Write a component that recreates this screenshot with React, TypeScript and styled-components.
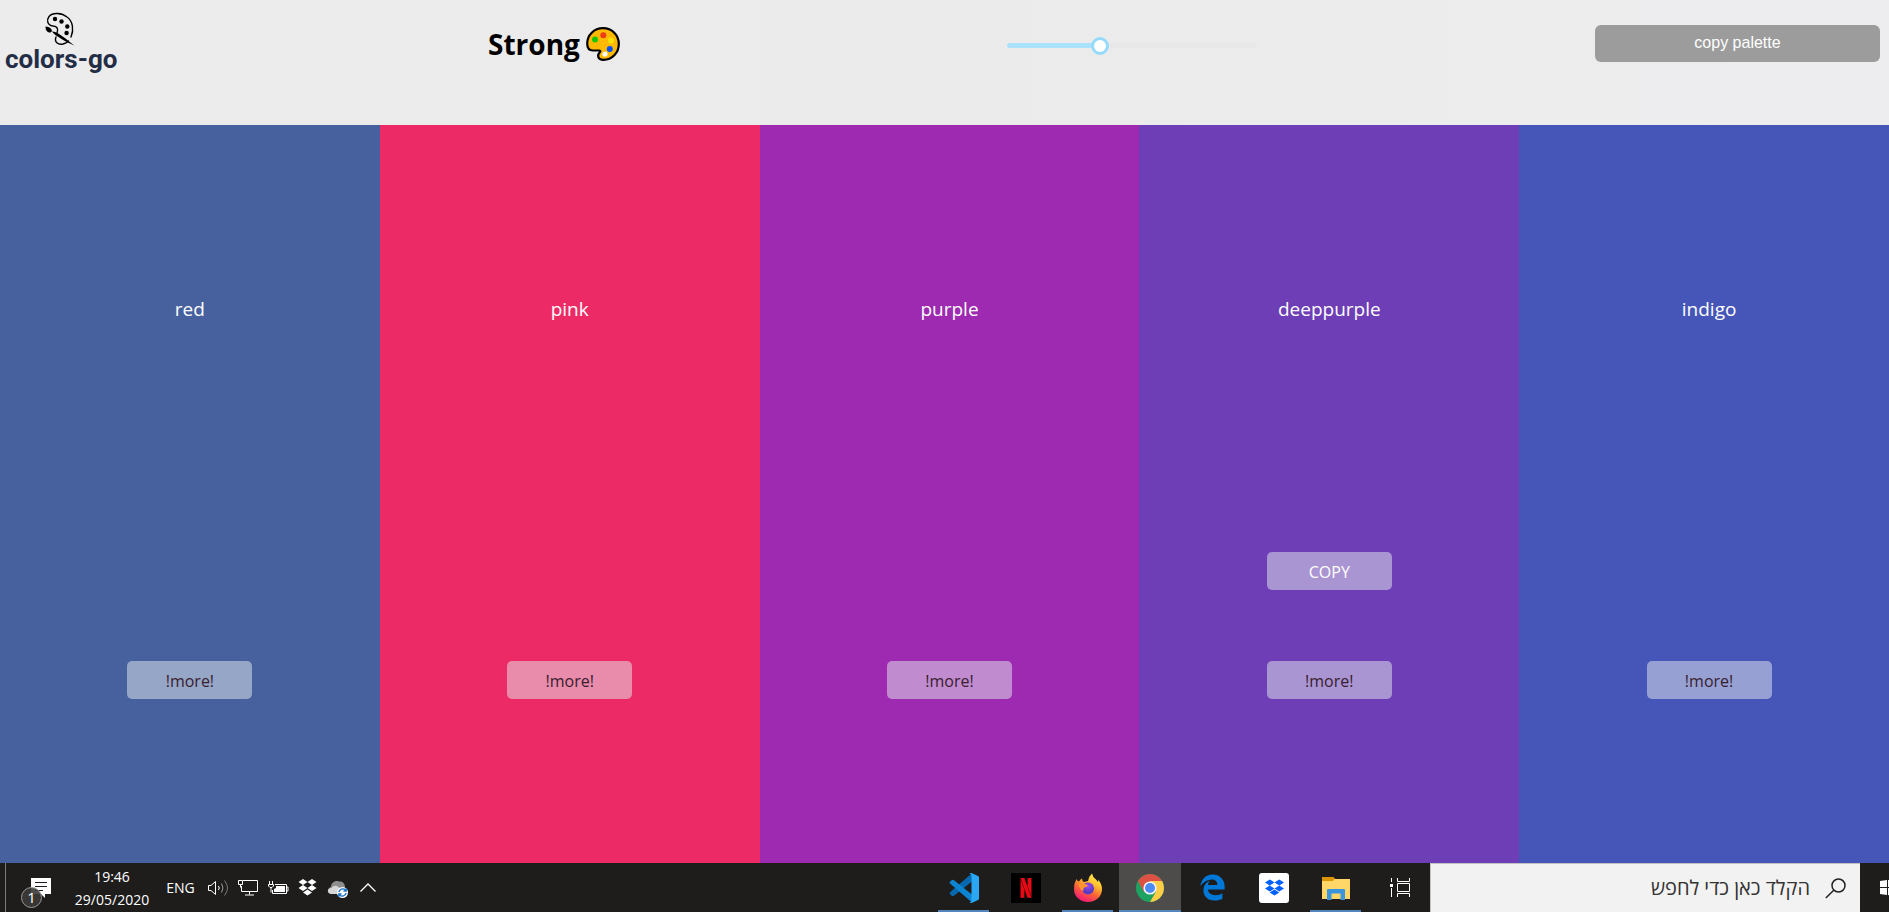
import React, { useState } from "react";
import styled, { createGlobalStyle } from "styled-components";
import { FaDropbox, FaEdgeLegacy } from "react-icons/fa";
import { SiNetflix } from "react-icons/si";

const GlobalStyle = createGlobalStyle`
  *, *::before, *::after { box-sizing: border-box; }
  body { margin: 0; overflow: hidden; font-family: "Open Sans", "Noto Sans", sans-serif; }
  button, input { font-family: inherit; margin: 0; }
  button { border: 0; padding: 0; background: none; cursor: pointer; }
  svg { display: block; }
`;

const Page = styled.div`
  display: flex;
  flex-direction: column;
  min-height: 100vh;
  overflow: hidden;
  background: #ececec;
`;

const Header = styled.header`
  display: grid;
  grid-template-columns: 483fr 519fr 588fr 285fr;
  align-items: start;
  height: 125px;
  padding: 0 9px 0 5px;
  background: linear-gradient(90deg, #ececed, #ebebeb 50%, #ededef);
`;

const Logo = styled.a`
  display: flex;
  flex-direction: column;
  width: 116px;
  padding-top: 12px;
  color: #232d45;
  text-decoration: none;
  white-space: nowrap;
  font: bold 26px/32px Roboto, "Liberation Sans", sans-serif;
`;

const LogoArt = styled.svg`
  width: 32px;
  height: 34px;
  margin: 0 0 -3px 40px;
`;

const Title = styled.h1`
  display: flex;
  align-items: center;
  gap: 6px;
  margin: 0;
  padding-top: 26px;
  color: #000;
  font-size: 28px;
  line-height: 36px;
  font-weight: 700;
`;

const Slider = styled.input`
  appearance: none;
  width: 250px;
  height: 18px;
  margin-top: 36px;
  background: transparent;

  &::-webkit-slider-runnable-track {
    height: 5px;
    border-radius: 3px;
    background: linear-gradient(90deg, #abe2fb 37%, #e8e8e8 37%);
  }
  &::-webkit-slider-thumb {
    appearance: none;
    width: 18px;
    height: 18px;
    margin-top: -6px;
    border: 3px solid #96dbfa;
    border-radius: 50%;
    background: #fff;
  }
`;

const CopyPalette = styled.button`
  height: 37px;
  margin-top: 25px;
  padding-bottom: 2px;
  border-radius: 6px;
  background: #9c9c9c;
  color: #fff;
  font: 16px/20px "Liberation Sans", sans-serif;
`;

const Palette = styled.main`
  display: grid;
  flex: 1;
  grid-template-columns: repeat(5, 1fr);
  width: calc(100% + 10px);
`;

const Swatch = styled.section<{ $color: string }>`
  display: flex;
  flex-direction: column;
  align-items: center;
  justify-content: space-between;
  padding: 169px 0 164px;
  background: ${(p) => p.$color};
`;

const SwatchName = styled.h2`
  margin: 0;
  color: #fff;
  font-size: 19px;
  line-height: 30px;
  font-weight: 400;
`;

const Actions = styled.div`
  display: flex;
  flex-direction: column;
  gap: 71px;
`;

const SwatchButton = styled.button<{ $strong?: boolean }>`
  width: 125px;
  height: 38px;
  padding-top: 2px;
  border-radius: 5px;
  background: rgba(230, 236, 238, 0.5);
  color: ${(p) => (p.$strong ? "#fff" : "#38202f")};
  font-size: 16px;
  line-height: 24px;
`;

const Taskbar = styled.footer`
  display: flex;
  height: 49px;
  background: #1e1d1c;
  color: #fff;
`;

const DesktopEdge = styled.button`
  width: 6px;
  border-right: 1px solid #7c7c7b;
`;

const TrayButton = styled.button<{ $width: number }>`
  width: ${(p) => p.$width}px;
  color: #fff;
  font-size: 14px;
  line-height: 23px;
`;

const Apps = styled.nav`
  display: flex;
  margin: 0 1px 0 auto;
`;

const AppButton = styled.button<{ $running?: boolean; $active?: boolean }>`
  display: flex;
  flex-direction: column;
  align-items: center;
  justify-content: center;
  position: relative;
  width: 62px;
  background: ${(p) => (p.$active ? "#4d4c4b" : "transparent")};

  &::after {
    content: "";
    position: absolute;
    bottom: 0;
    left: ${(p) => (p.$active ? 0 : 5)}px;
    right: ${(p) => (p.$active ? 0 : 6)}px;
    height: 2px;
    background: ${(p) => (p.$running || p.$active ? "#5585bd" : "transparent")};
  }
`;

const Tile = styled.span<{ $bg: string; $fg: string }>`
  display: grid;
  place-items: center;
  width: 30px;
  height: 30px;
  border-radius: ${(p) => (p.$bg === "#fff" ? 3 : 0)}px;
  background: ${(p) => p.$bg};
  color: ${(p) => p.$fg};
`;

const Search = styled.label`
  display: flex;
  align-items: center;
  gap: 15px;
  width: 430px;
  padding: 0 14px;
  border-top: 1px solid #c2c2c2;
  border-left: 1px solid #c2c2c2;
  background: #f2f2f2;
  direction: rtl;
`;

const SearchInput = styled.input`
  flex: 1;
  min-width: 0;
  padding: 0;
  border: 0;
  outline: 0;
  background: transparent;
  font-size: 20px;
  line-height: 28px;
  &::placeholder { color: #333; opacity: 1; }
`;

const StartButton = styled.button`
  width: 29px;
  overflow: hidden;
`;

const swatches = [
  { name: "red", color: "#47619f" },
  { name: "pink", color: "#ec2b66" },
  { name: "purple", color: "#9d2ab1" },
  { name: "deeppurple", color: "#6d3eb6", hovered: true },
  { name: "indigo", color: "#4655b8" },
];

const PaletteSketch = () => (
  <LogoArt viewBox="0 0 32 34" aria-hidden="true">
    <path
      d="M12 21C13.500 17 12.500 14.500 8 14C2 13 1.500 8 4 4.500C8 0 17 1 22 5C28 9 29 18 26 25M11 25C9 30 13 33 18 32C20 31.500 22 30.500 23.500 29"
      fill="none" stroke="#000" strokeWidth="1.400" strokeLinecap="round"
    />
    <circle cx="10" cy="7" r="2.200" />
    <circle cx="16.500" cy="9.500" r="2.200" />
    <circle cx="22.300" cy="14.500" r="2.200" />
    <circle cx="21.600" cy="21" r="2.200" />
    <path d="M.5 14.500C3 15 5 15 6.500 17.500C7.500 19 6.500 20.500 5 20.500C2 20.500.5 18 .5 14.500zM7 19.500C10 19 14 21.500 17 24C22 27.500 26 31 29.500 33.500C24 31.500 19 28.500 15 26C12 24 9 22.500 7 19.500z" />
  </LogoArt>
);

const PaletteEmoji = () => (
  <svg width="34" height="34" viewBox="0 0 34 34" aria-hidden="true">
    <path
      d="M17 1.200C8 1.200 1.200 8 1.200 16.500C1.200 21 3.500 23.500 7 23.500H13.500C14.500 23.500 14.500 24.500 13.800 25.300C11 28 11.500 32.800 17.500 32.800C26 32.800 32.800 26 32.800 17C32.800 8 26 1.200 17 1.200z"
      fill="#ffb900" stroke="#000" strokeWidth="2.200"
    />
    <circle cx="9" cy="12.500" r="3" fill="#16c60c" />
    <circle cx="17.300" cy="8.200" r="3" fill="#f03a17" />
    <circle cx="25" cy="13.500" r="3" fill="#fce100" />
    <circle cx="23.800" cy="22" r="3" fill="#0050ff" />
    <circle cx="19" cy="27" r="2.600" fill="#fff" />
  </svg>
);

const NotificationIcon = () => (
  <svg width="60" height="49" viewBox="0 0 60 49">
    <path d="M25 15H45V31H39V35L35 31H25z" fill="#fff" />
    <path d="M29 19.500H41M29 23.500H41M29 27.500H37" stroke="#1e1d1c" />
    <circle cx="25.500" cy="34.500" r="10" fill="#3c3b3a" fillOpacity=".9" stroke="#9a9a99" />
    <text x="25.500" y="40" textAnchor="middle" fill="#fff" fontSize="15">1</text>
  </svg>
);

const VolumeIcon = () => (
  <svg width="30" height="49" viewBox="0 0 30 49" fill="none">
    <path d="M5.500 22.500H8L12.500 18.500V31.500L8 27.500H5.500z" stroke="#fff" />
    <path d="M15.500 23Q17 25 15.500 27" stroke="#fff" />
    <path d="M18.500 20.500Q21.500 25 18.500 29.500" stroke="#999" />
    <path d="M21.500 17.500Q27.500 25 21.500 32.500" stroke="#777" />
  </svg>
);

const NetworkIcon = () => (
  <svg width="30" height="49" viewBox="0 0 30 49" fill="none" stroke="#fff">
    <path d="M10 17.500H24.500V28.500H8.500V23M16.500 29V31.500M12 32H21" />
    <path d="M5.500 17.500H9.500V21.500H5.500zM7.500 21.500V24.500" />
  </svg>
);

const BatteryIcon = () => (
  <svg width="30" height="49" viewBox="0 0 30 49">
    <path d="M12 21.500H23.500V30.500H9.500V27M24 24H25V28H24" fill="none" stroke="#fff" />
    <path d="M13 23H22V29H11V26L13 25z" fill="#fff" />
    <path d="M6.500 18V21M9.500 18V21M5.500 21.500H10.500V23L9 24.500H7L5.500 23zM8 24.500V29.500" fill="none" stroke="#fff" />
  </svg>
);

const TrayDropbox = () => (
  <svg width="30" height="49" viewBox="0 0 30 49" fill="#fff">
    <path d="M10 16L14.500 19L10 22L5.500 19zM19 16L23.500 19L19 22L14.500 19zM10 22L14.500 25L10 28L5.500 25zM19 22L23.500 25L19 28L14.500 25zM14.500 26.500L19 29.500L14.500 32.500L10 29.500z" />
  </svg>
);

const CloudIcon = () => (
  <svg width="30" height="49" viewBox="0 0 30 49">
    <path d="M9 31C4 31 4 25 8 24C8 20 12 17 16 18.500C19 18 22 20 22 24V31z" fill="#8d8d8d" />
    <path d="M8 31C3.500 30 4 25 8.500 25C11 21 16 23 17 26V31z" fill="#d5d5d5" />
    <circle cx="19.500" cy="29.500" r="5.500" fill="#fff" />
    <path d="M15.800 29A4 4 0 0 1 22.500 27M23.200 25V28H20.500M23.200 30A4 4 0 0 1 16.500 32M15.800 34V31H18.500" fill="none" stroke="#1670c4" strokeWidth="1.300" />
  </svg>
);

const ChevronIcon = () => (
  <svg width="30" height="49" viewBox="0 0 30 49">
    <path d="M7.500 28.500L15 21L22.500 28.500" fill="none" stroke="#fff" strokeWidth="1.300" />
  </svg>
);

const CodeIcon = () => (
  <svg width="30" height="30" viewBox="0 0 30 30">
    <path d="M1 21.300L3 23Q4 23.500 5 22.700L23 8.500V.3L1 19.300Q.2 20.300 1 21.300z" fill="#0669b0" />
    <path d="M1 8.500L3 7Q4 6.500 5 7.300L23 21.500V29.500L1 10.500Q.2 9.500 1 8.500z" fill="#0c84d0" />
    <path d="M22.500 0L29 3Q30 3.500 30 4.500V25.500Q30 26.500 29 27L22.500 30Q21 30 20.500 29Q22.500 29.500 22.500 27.500V2.500Q22.500.5 20.500 1Q21 0 22.500 0z" fill="#2aa7f5" />
  </svg>
);

const FirefoxIcon = () => (
  <svg width="30" height="30" viewBox="0 0 30 30">
    <defs>
      <linearGradient id="flame" x1=".8" y1="0" x2=".3" y2="1">
        <stop offset="0" stopColor="#fff44f" />
        <stop offset=".35" stopColor="#ffbd2e" />
        <stop offset=".6" stopColor="#ff6a33" />
        <stop offset="1" stopColor="#f5147a" />
      </linearGradient>
      <radialGradient id="globe" cx=".5" cy=".3">
        <stop offset="0" stopColor="#a34cf0" />
        <stop offset="1" stopColor="#5a3bc4" />
      </radialGradient>
    </defs>
    <path d="M3.500 6Q4 8 6 8.500Q7 6.500 9 5.500Q9 8 11 9L15 8Q16 3 19 .5Q19.500 4 23 6.500L25 9Q25.500 8 25 6.500Q29 11 29 16C29 23.500 23 29 15 29S1 23.500 1 16Q1 10 3.500 6z" fill="url(#flame)" />
    <circle cx="15" cy="15.500" r="6" fill="url(#globe)" />
    <path d="M5 11Q9 8.500 15 12.500Q14 14.500 11 14.500Q10 16 10.500 18Q7 17 6 13z" fill="#ff9430" />
  </svg>
);

const ChromeIcon = () => (
  <svg width="28" height="28" viewBox="0 0 28 28">
    <circle cx="14" cy="14" r="14" fill="#1da261" />
    <path d="M14 14L8 18L1.900 7A14 14 0 0 1 26.100 7z" fill="#dd5144" />
    <path d="M14 7H26.100A14 14 0 0 1 14 28L20 17.500z" fill="#ffcd46" />
    <circle cx="14" cy="14" r="6.600" fill="#f4f4f4" />
    <circle cx="14" cy="14" r="5" fill="#4c8bf5" />
  </svg>
);

const FolderIcon = () => (
  <svg width="28" height="24" viewBox="0 0 28 24">
    <path d="M0 2Q0 1 1 1H11L13 3H27V22H0z" fill="#fbc94e" />
    <path d="M0 2Q0 1 1 1H11Q12 1 12.500 3L11 5H0z" fill="#dd9400" />
    <path d="M0 5H11L13 3H28V23H0z" fill="#ffd667" />
    <path d="M5 24V14Q5 13 6 13H22Q23 13 23 14V24H18.500V17.500H9.500V24z" fill="#3a95dc" />
  </svg>
);

const TaskViewIcon = () => (
  <svg width="62" height="49" viewBox="0 0 62 49" fill="none" stroke="#fff">
    <path d="M24.500 15V19M24.500 25V34M30.500 15V18.500H42.500V15M30.500 34V30.500H42.500V34M30.500 20.500H42.500V28.500H30.500z" />
    <path d="M23 21H26V24H23z" fill="#fff" stroke="none" />
  </svg>
);

const SearchIcon = () => (
  <svg width="21" height="21" viewBox="0 0 21 21" fill="none" stroke="#222" strokeWidth="1.500">
    <circle cx="13.500" cy="7.500" r="6.500" />
    <path d="M9 12L.8 20" />
  </svg>
);

const StartIcon = () => (
  <svg width="36" height="49" viewBox="0 0 36 49" fill="#fff">
    <path d="M20 18L27 17V24H20zM28 17L36 16V24H28zM20 25H27V32L20 31zM28 25H36V33L28 32z" />
  </svg>
);

export default function App() {
  const [level, setLevel] = useState(36);

  return (
    <>
      <GlobalStyle />
      <Page>
        <Header>
          <Logo href="#">
            <PaletteSketch />
            colors-go
          </Logo>
          <Title>
            Strong
            <PaletteEmoji />
          </Title>
          <Slider
            type="range"
            aria-label="Shade level"
            value={level}
            onChange={(e) => setLevel(Number(e.target.value))}
          />
          <CopyPalette type="button">copy palette</CopyPalette>
        </Header>

        <Palette>
          {swatches.map((s) => (
            <Swatch key={s.name} $color={s.color}>
              <SwatchName>{s.name}</SwatchName>
              <Actions>
                {s.hovered && <SwatchButton type="button" $strong>COPY</SwatchButton>}
                <SwatchButton type="button">!more!</SwatchButton>
              </Actions>
            </Swatch>
          ))}
        </Palette>

        <Taskbar>
          <DesktopEdge type="button" aria-label="Show desktop" />
          <TrayButton type="button" $width={60} aria-label="Notifications"><NotificationIcon /></TrayButton>
          <TrayButton type="button" $width={92}>19:46<br />29/05/2020</TrayButton>
          <TrayButton type="button" $width={45}>ENG</TrayButton>
          <TrayButton type="button" $width={30} aria-label="Volume"><VolumeIcon /></TrayButton>
          <TrayButton type="button" $width={30} aria-label="Network"><NetworkIcon /></TrayButton>
          <TrayButton type="button" $width={30} aria-label="Battery"><BatteryIcon /></TrayButton>
          <TrayButton type="button" $width={30} aria-label="Dropbox status"><TrayDropbox /></TrayButton>
          <TrayButton type="button" $width={30} aria-label="Cloud sync"><CloudIcon /></TrayButton>
          <TrayButton type="button" $width={30} aria-label="Hidden icons"><ChevronIcon /></TrayButton>
          <Apps aria-label="Applications">
            <AppButton type="button" $running aria-label="Visual Studio Code"><CodeIcon /></AppButton>
            <AppButton type="button" aria-label="Netflix"><Tile $bg="#000" $fg="#e50914"><SiNetflix size={20} /></Tile></AppButton>
            <AppButton type="button" $running aria-label="Firefox"><FirefoxIcon /></AppButton>
            <AppButton type="button" $active aria-label="Chrome"><ChromeIcon /></AppButton>
            <AppButton type="button" aria-label="Edge"><FaEdgeLegacy size={27} color="#0078d7" /></AppButton>
            <AppButton type="button" aria-label="Dropbox"><Tile $bg="#fff" $fg="#0061ff"><FaDropbox size={19} /></Tile></AppButton>
            <AppButton type="button" $running aria-label="File Explorer"><FolderIcon /></AppButton>
            <AppButton type="button" aria-label="Task view"><TaskViewIcon /></AppButton>
          </Apps>
          <Search>
            <SearchIcon />
            <SearchInput type="text" placeholder="הקלד כאן כדי לחפש" aria-label="הקלד כאן כדי לחפש" />
          </Search>
          <StartButton type="button" aria-label="Start"><StartIcon /></StartButton>
        </Taskbar>
      </Page>
    </>
  );
}
